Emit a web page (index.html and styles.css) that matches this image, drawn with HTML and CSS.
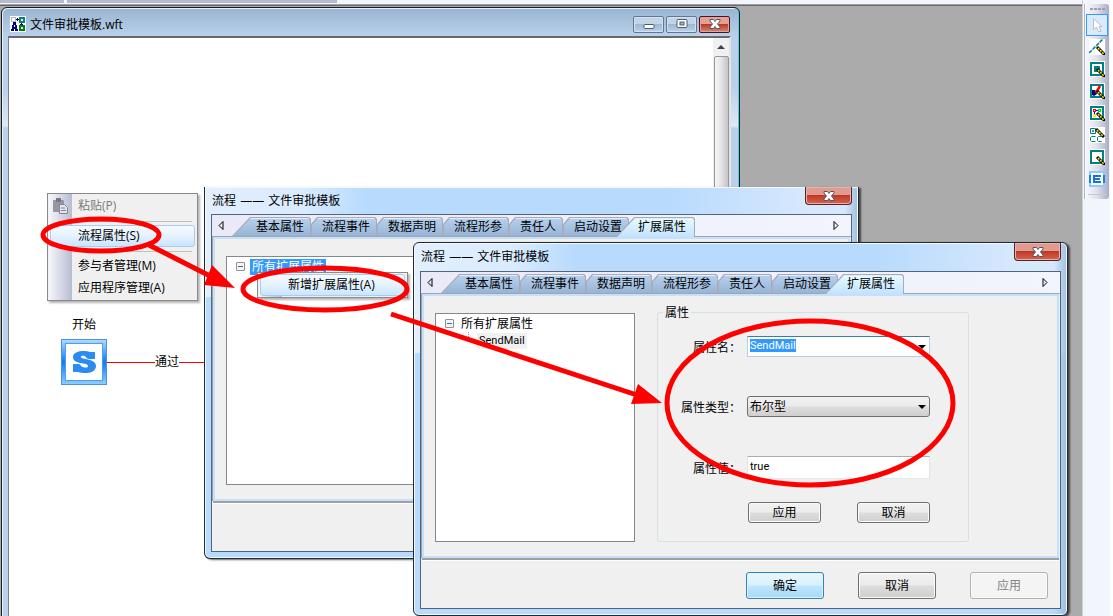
FILE: index.html
```html
<!DOCTYPE html>
<html lang="zh-CN">
<head>
    <meta charset="UTF-8">
    <meta name="viewport" content="width=device-width, initial-scale=1.0">
    <title>文件审批模板.wft</title>
    <link rel="stylesheet" href="styles.css">
</head>

<body>
    <div class="workspace">
        <div class="ribbon"><span class="ribbon-group short"></span><span class="ribbon-group"></span></div>
        <main class="mdi">

            <!-- Template editor window -->
            <section class="editor">
                <header class="editor-title">
                    <svg width="16" height="16" viewBox="0 0 16 16" shape-rendering="crispEdges">
                        <rect width="16" height="16" fill="#fff"/>
                        <path d="M1 1h5v5H1zM2 2v3h3V2z" fill="#b8b8b8" fill-rule="evenodd"/>
                        <path d="M9 1h6v6H9zM11 3v2h2V3z" fill="#008080" fill-rule="evenodd"/>
                        <path d="M9 9h6v6H9zM11 11v2h2v-2z" fill="#008000" fill-rule="evenodd"/>
                        <path d="M6 3h3v1H6zM7 2h1v3H7zM11 7h1v2h-1zM10 8h3v1h-3z" fill="#000080"/>
                        <path d="M3 6h3v3h1v4h1v2H5v-2H4v2H1v-2h1V9h1zM4 9v2h1V9z" fill="#000080" fill-rule="evenodd"/>
                    </svg>
                    <h1>文件审批模板.wft</h1>
                    <div class="window-buttons">
                        <button type="button" class="win-btn" aria-label="最小化"><svg width="12" height="12" viewBox="0 0 12 12"><rect x="1" y="6.500" width="10" height="4" rx="1" fill="#fff" stroke="#535b70"/></svg></button>
                        <button type="button" class="win-btn" aria-label="最大化"><svg width="12" height="12" viewBox="0 0 12 12"><rect x="1" y="1.500" width="10" height="8" rx="1" fill="#fff" stroke="#535b70"/><rect x="4" y="4" width="4" height="3" fill="#9ab6d4" stroke="#535b70"/></svg></button>
                        <button type="button" class="win-btn close" aria-label="关闭"><svg width="12" height="10" viewBox="0 0 12 10"><use href="#cross"/></svg></button>
                    </div>
                </header>
                <div class="editor-body">
                    <div class="sheet"></div>
                    <div class="scrollbar">
                        <svg width="8" height="5" viewBox="0 0 8 5"><path d="M0 5l4-4l4 4z" fill="#404040"/></svg>
                        <div class="thumb"></div>
                    </div>
                </div>
            </section>

            <!-- Start node of the flow -->
            <div class="start-label">开始</div>
            <div class="start-flow">
                <svg width="46" height="46" viewBox="0 0 46 46">
                    <defs>
                        <linearGradient id="frame" x1="0" y1="0" x2="0" y2="1">
                            <stop offset="0" stop-color="#b5dcff"/>
                            <stop offset=".5" stop-color="#0a7cf5"/>
                            <stop offset="1" stop-color="#8fd0ff"/>
                        </linearGradient>
                    </defs>
                    <rect x=".5" y=".5" width="45" height="45" fill="url(#frame)" stroke="#4a94dc"/>
                    <rect x="4.500" y="4.500" width="37" height="37" fill="#fff" stroke="#4b9ff0"/>
                    <path d="M34 13h-5c-6-2-17-1-17 5c0 8 15 5 15 9c0 2-4 2-7 0c-1-2-2-2-3-2h-5v8h5c6 2 18 2 18-6c0-8-15-6-15-9c0-2 4-1 5 0c1 2 2 2 4 2h5z" fill="#2a8cf2"/>
                </svg>
                <span class="link"></span>
                <span>通过</span>
                <span class="link grow"></span>
            </div>

            <nav class="menu flow-menu">
                <button type="button" disabled>粘贴(P)
                    <svg class="paste" width="17" height="16" viewBox="0 0 17 16"><rect x="1" y="2" width="11" height="12" rx="1" fill="#9696a2"/><rect x="4" y="0" width="5" height="4" fill="#777783"/><path d="M7.500 6.500h5l3 3v6h-8z" fill="#e4e4ee" stroke="#858591"/><path d="M9 10h4M9 12.500h5" stroke="#858591"/></svg>
                </button>
                <hr>
                <button type="button" class="hot">流程属性(S)</button>
                <hr>
                <button type="button">参与者管理(M)</button>
                <button type="button">应用程序管理(A)</button>
            </nav>

            <!-- First property dialog -->
            <section class="dialog dialog-back">
                <header class="dialog-title">
                    <h2>流程 <span class="dash">——</span> 文件审批模板</h2>
                    <button type="button" class="dialog-close" aria-label="关闭"><svg width="12" height="10" viewBox="0 0 12 10"><use href="#cross"/></svg></button>
                </header>
                <div class="client">
                    <div class="tabs">
                        <button type="button" class="scroll" aria-label="左移"><svg width="6" height="9" viewBox="0 0 6 9"><path d="M5 .5v8L1 4.500z" fill="none" stroke="#000"/></svg></button>
                        <button type="button" class="tab first">基本属性</button>
                        <button type="button" class="tab">流程事件</button>
                        <button type="button" class="tab">数据声明</button>
                        <button type="button" class="tab">流程形参</button>
                        <button type="button" class="tab">责任人</button>
                        <button type="button" class="tab">启动设置</button>
                        <button type="button" class="tab active">扩展属性</button>
                        <button type="button" class="scroll right" aria-label="右移"><svg width="6" height="9" viewBox="0 0 6 9"><path d="M1 .5v8L5 4.500z" fill="none" stroke="#000"/></svg></button>
                    </div>
                    <div class="panel">
                        <ul class="tree">
                            <li><span class="toggle"></span><span class="node selected">所有扩展属性</span></li>
                        </ul>
                    </div>
                    <footer class="actions"></footer>
                </div>
            </section>

            <nav class="menu attr-menu">
                <button type="button" class="hot">新增扩展属性(A)</button>
            </nav>

            <!-- Second property dialog -->
            <section class="dialog dialog-front">
                <header class="dialog-title">
                    <h2>流程 <span class="dash">——</span> 文件审批模板</h2>
                    <button type="button" class="dialog-close" aria-label="关闭"><svg width="12" height="10" viewBox="0 0 12 10"><use href="#cross"/></svg></button>
                </header>
                <div class="client">
                    <div class="tabs">
                        <button type="button" class="scroll" aria-label="左移"><svg width="6" height="9" viewBox="0 0 6 9"><path d="M5 .5v8L1 4.500z" fill="none" stroke="#000"/></svg></button>
                        <button type="button" class="tab first">基本属性</button>
                        <button type="button" class="tab">流程事件</button>
                        <button type="button" class="tab">数据声明</button>
                        <button type="button" class="tab">流程形参</button>
                        <button type="button" class="tab">责任人</button>
                        <button type="button" class="tab">启动设置</button>
                        <button type="button" class="tab active">扩展属性</button>
                        <button type="button" class="scroll right" aria-label="右移"><svg width="6" height="9" viewBox="0 0 6 9"><path d="M1 .5v8L5 4.500z" fill="none" stroke="#000"/></svg></button>
                    </div>
                    <div class="panel">
                        <ul class="tree">
                            <li><span class="toggle"></span><span class="node">所有扩展属性</span>
                                <ul>
                                    <li><span class="node current">SendMail</span></li>
                                </ul>
                            </li>
                        </ul>
                        <fieldset>
                            <legend>属性</legend>
                            <form class="attr-form">
                                <label for="attr-name">属性名：</label>
                                <div class="combo">
                                    <input type="text" id="attr-name" value="SendMail">
                                    <span class="arrow"></span>
                                </div>
                                <label for="attr-type">属性类型：</label>
                                <div class="pick">
                                    <select id="attr-type"><option>布尔型</option></select>
                                    <span class="arrow"></span>
                                </div>
                                <label for="attr-value">属性值：</label>
                                <input type="text" id="attr-value" class="value" value="true">
                                <div class="form-buttons">
                                    <button type="button" class="btn">应用</button>
                                    <button type="button" class="btn">取消</button>
                                </div>
                            </form>
                        </fieldset>
                    </div>
                    <footer class="actions">
                        <button type="button" class="btn large default">确定</button>
                        <button type="button" class="btn large">取消</button>
                        <button type="button" class="btn large" disabled>应用</button>
                    </footer>
                </div>
            </section>

            <!-- Red marks that show the order of the steps -->
            <svg class="marks">
                <g fill="none" stroke="#f00" stroke-width="5">
                    <ellipse cx="101" cy="229" rx="58" ry="16"/>
                    <ellipse cx="325" cy="283" rx="82" ry="21"/>
                    <ellipse cx="810" cy="397" rx="143" ry="82"/>
                    <path d="M149 239L212 271M391 308L640 390"/>
                </g>
                <path d="M235 282L212 259L204 279zM662 397L638 378L631 398z" fill="#f00"/>
            </svg>
        </main>
    </div>

    <aside class="side">
        <div class="toolbox">
            <span class="grip"></span>
            <button type="button" class="tool on" aria-label="选择"><svg width="16" height="16" viewBox="0 0 16 16"><path d="M4.500 1.500v11l3-2.500l2 4.500h2.500l-2-5h3z" fill="#fff" stroke="#bcc0c8"/></svg></button>
            <button type="button" class="tool" aria-label="连线"><svg width="16" height="16" viewBox="0 0 16 16"><rect width="16" height="16" fill="#fff"/><path d="M0 14L14 0" stroke="#008080" stroke-width="1.500" stroke-dasharray="4 1"/><use href="#pen"/></svg></button>
            <button type="button" class="tool" aria-label="活动"><svg width="16" height="16" viewBox="0 0 16 16"><use href="#box"/><rect x="5" y="5" width="6" height="6" fill="#008080"/><use href="#pen"/></svg></button>
            <button type="button" class="tool" aria-label="审批"><svg width="16" height="16" viewBox="0 0 16 16"><use href="#box"/><path d="M3 7h3l2 4l-3 2l-2-1z" fill="#000080"/><path d="M6 9l2-1l3-5" fill="none" stroke="#f00" stroke-width="2.500"/><use href="#pen"/></svg></button>
            <button type="button" class="tool" aria-label="子流程"><svg width="16" height="16" viewBox="0 0 16 16"><use href="#box"/><path d="M7 5.500h3M5.500 7v3" stroke="#00f"/><rect x="4.500" y="4.500" width="2" height="2" fill="none" stroke="#f00"/><rect x="9.500" y="4.500" width="2" height="2" fill="none" stroke="#0d0"/><rect x="4.500" y="9.500" width="2" height="2" fill="none" stroke="#ee0"/><use href="#pen"/></svg></button>
            <button type="button" class="tool" aria-label="抄送"><svg width="16" height="16" viewBox="0 0 16 16"><rect width="16" height="16" fill="#fff"/><path d="M1.500 1.500h5v5h-5zM3.500 3.500h1v1h-1z" fill="none" stroke="#008080"/><path d="M6.500 9.500h-4l-1 1v3l1 1h4M12.500 9.500h-3l-1 1v3l1 1h3" fill="none" stroke="#008080"/><path d="M7 2l8 8" stroke="#000" stroke-width="3"/><path d="M8 3l6 6" stroke="#fe0" stroke-width="1.500" stroke-dasharray="2 1"/></svg></button>
            <button type="button" class="tool" aria-label="空节点"><svg width="16" height="16" viewBox="0 0 16 16"><use href="#box"/><use href="#pen"/></svg></button>
            <button type="button" class="tool" aria-label="结束"><svg width="16" height="16" viewBox="0 0 16 16"><rect width="16" height="16" fill="#8ccaff"/><rect y="4" width="16" height="8" fill="#1683f2"/><rect x="2" y="2" width="12" height="12" fill="#fff"/><path d="M12 5H5v6h7M5 8h6" fill="none" stroke="#1b70df" stroke-width="2"/></svg></button>
            <span class="rule"></span>
        </div>
    </aside>

    <svg class="defs">
        <defs>
            <g id="pen"><path d="M8 8l8 8" stroke="#000" stroke-width="3"/><path d="M9 9l6 6" stroke="#fe0" stroke-width="1.500" stroke-dasharray="2 1"/></g>
            <g id="box"><rect width="16" height="16" fill="#fff"/><rect x="2" y="2" width="12" height="12" fill="#fff" stroke="#008080" stroke-width="2"/></g>
            <g id="cross"><path d="M1 .5h3.500L6 2.500L7.500 .5H11V2L8.500 5L11 8v1.500H7.500L6 7.500L4.500 9.500H1V8l2.500-3L1 2z" fill="#fff" stroke="#535666"/></g>
        </defs>
    </svg>
    <script>
        document.getElementById("attr-name").select();
    </script>
</body>

</html>
```
FILE: styles.css
```css
* {
    box-sizing: border-box;
}

body {
    margin: 0;
    height: 100vh;
    display: flex;
    overflow: hidden;
    font-family: "Open Sans", "Noto Sans CJK SC", sans-serif;
    font-size: 12px;
    line-height: 16px;
    color: #000;
    background-color: #f3f5fd;
}

button,
input,
select {
    font: inherit;
    color: inherit;
    margin: 0;
    padding: 0;
}

h1,
h2 {
    margin: 0;
    font-size: 12px;
    font-weight: normal;
}

svg {
    display: block;
    flex: none;
}

.defs {
    position: absolute;
    width: 0;
    height: 0;
}

.workspace {
    flex: 1;
    display: flex;
    flex-direction: column;
    min-width: 0;
}

.ribbon {
    flex: none;
    display: flex;
    gap: 3px;
    height: 6px;
    border-bottom: 1px solid #696969;
    box-shadow: inset 0 -1px #a0a0a0;
}

.ribbon-group {
    width: 270px;
    height: 3px;
    background-color: #b5bad0;
}

.ribbon-group.short {
    width: 64px;
}

.mdi {
    flex: 1;
    position: relative;
    overflow: hidden;
    background-color: #ababab;
}

/* Editor window */
.editor {
    position: absolute;
    left: 1px;
    top: 1px;
    bottom: -20px;
    width: 739px;
    display: flex;
    flex-direction: column;
    padding: 0 8px 0 6px;
    border: 1px solid #1c1c1c;
    border-radius: 6px 6px 0 0;
    background: linear-gradient(#99b4d1, #b9d1ea 28px, #b9d1ea 80px, #dce8f6 118px, #b9d1ea 120px);
    box-shadow: inset -1px 0 #3fd3ee, inset 1px 1px #e4f0fb;
}

.editor-title {
    display: flex;
    align-items: center;
    gap: 4px;
    height: 28px;
    padding-top: 4px;
    padding-left: 2px;
}

.editor-title h1 {
    padding-top: 2px;
}

.window-buttons {
    display: flex;
    gap: 2px;
    margin-left: auto;
    padding-right: 1px;
}

.win-btn {
    display: flex;
    align-items: center;
    justify-content: center;
    width: 31px;
    height: 17px;
    border: 1px solid #64758f;
    border-radius: 2px;
    background: linear-gradient(#c2d5e8 45%, #9cb8d5 50%, #bcd2e8);
    box-shadow: inset 0 0 0 1px #d3e2f1;
}

.win-btn.close {
    border-color: #4b1320;
    background: linear-gradient(#e5a095 45%, #b93b22 50%, #d88778);
    box-shadow: inset 0 0 0 1px #e5a397;
}

.editor-body {
    flex: 1;
    display: flex;
    border: 1px solid #808080;
    border-top: 2px solid #696969;
    border-right: 2px solid #e3e3e3;
    background-color: #fff;
}

.sheet {
    flex: 1;
}

.scrollbar {
    display: flex;
    flex-direction: column;
    align-items: center;
    gap: 7px;
    width: 16px;
    padding-top: 6px;
    background-color: #f0f0f0;
}

.thumb {
    flex: 1;
    width: 15px;
    border: 1px solid #979797;
    border-radius: 2px;
    background: linear-gradient(90deg, #f5f5f5, #e6e6e8 45%, #c3c3c8);
}

/* Flow drawing */
.start-label {
    position: absolute;
    left: 72px;
    top: 311px;
}

.start-flow {
    position: absolute;
    left: 61px;
    top: 333px;
    width: 143px;
    display: flex;
    align-items: center;
}

.link {
    width: 48px;
    height: 1px;
    background-color: #f00;
}

.link.grow {
    flex: 1;
}

/* Context menus */
.menu {
    position: absolute;
    display: flex;
    flex-direction: column;
    width: 151px;
    padding: 1px 2px;
    border: 1px solid #8a8a8a;
    background: linear-gradient(90deg, #f5f6fc, #b7bcd2) 1px 0 / 23px 100% no-repeat #f0f0f0;
    box-shadow: 2px 2px 2px rgba(0, 0, 0, 0.3);
}

.menu button {
    position: relative;
    height: 22px;
    padding-left: 27px;
    border: 1px solid transparent;
    border-radius: 3px;
    background: none;
    text-align: left;
}

.menu button:disabled {
    color: #7b7b7b;
}

.menu .hot {
    border-color: #a9cdee;
    background: linear-gradient(#f5faff, #e5f2ff 50%, #c9e5ff);
}

.menu hr {
    width: 114px;
    height: 1px;
    margin: 4px 0 3px 28px;
    border: 0;
    background-color: #c0c0c0;
}

.paste {
    position: absolute;
    left: 1px;
    top: 2px;
}

.flow-menu {
    left: 47px;
    top: 187px;
}

.attr-menu {
    left: 257px;
    top: 266px;
}

/* Property dialogs */
.dialog {
    position: absolute;
    width: 655px;
    padding: 0 6px 6px;
    border: 1px solid #1f2a33;
    border-radius: 6px;
    background: linear-gradient(90deg, transparent 98%, #9fbede) 0 0 / 100% 100%, linear-gradient(90deg, #e2effd, #d9ebfe 15%, #b7dafd 25%, #b7dafd 70%, #d6e8fc 92%) 0 0 / 100% 110px no-repeat #b7dafd;
    box-shadow: inset 0 0 0 1px #f2f9ff, 2px 1px 2px rgba(0, 0, 0, 0.6);
}

.dialog-back {
    left: 204px;
    top: 181px;
    border-top: 0;
    border-radius: 0 0 6px 6px;
}

.dialog-front {
    left: 413px;
    top: 236px;
}

.dialog-title {
    display: flex;
    align-items: center;
    justify-content: space-between;
    height: 28px;
    padding-left: 1px;
}

.dialog-back .dialog-title {
    height: 27px;
}

.dash {
    padding: 0 1px;
}

.dialog-close {
    align-self: flex-start;
    display: flex;
    align-items: center;
    justify-content: center;
    width: 47px;
    height: 18px;
    border: 1px solid #54232a;
    border-top: 0;
    border-radius: 0 0 4px 4px;
    background: linear-gradient(#e09a90 45%, #bb3a25 50%, #d9634e);
    box-shadow: inset 0 0 0 1px #eab3aa;
}

.client {
    border: 1px solid #53657a;
    background-color: #f0f0f0;
}

.tabs {
    display: flex;
    align-items: flex-end;
    height: 22px;
    border-bottom: 1px solid #a5a5ad;
    background: linear-gradient(90deg, #eae9f8, #f2f5fd);
}

.scroll {
    display: flex;
    align-items: center;
    justify-content: center;
    width: 20px;
    height: 22px;
    padding-right: 2px;
    border: 0;
    background: none;
}

.scroll.right {
    width: 30px;
    margin-left: auto;
    padding-right: 0;
}

.tab {
    position: relative;
    isolation: isolate;
    height: 19px;
    padding: 1px 7px 0 11px;
    border: 0;
    background-color: #aaa9b5;
    clip-path: polygon(0 7px, 6px 0, calc(100% - 2px) 0, 100% 2px, 100% 100%, 0 100%);
}

.tab::before {
    content: "";
    position: absolute;
    inset: 1px 1px 0;
    z-index: -1;
    background: linear-gradient(#b6d1f0, #98b4d4);
    box-shadow: inset 0 1px #e3edf8;
    clip-path: inherit;
}

.tab.first {
    padding-left: 24px;
    clip-path: polygon(0 100%, 18px 0, calc(100% - 2px) 0, 100% 2px, 100% 100%);
}

.tab.active {
    height: 20px;
    margin-left: -13px;
    margin-bottom: -1px;
    padding: 0 9px 0 22px;
    clip-path: polygon(0 100%, 18px 0, calc(100% - 2px) 0, 100% 2px, 100% 100%);
}

.tab.active::before {
    background: linear-gradient(#e6fcff, #c3e2ff);
}

.panel {
    display: flex;
    align-items: flex-start;
    gap: 22px;
    margin-right: 1px;
    margin-left: 1px;
    padding: 17px 11px 14px;
    border: 2px solid #c3e0fd;
    box-shadow: 0 2px #a0a0a0, 0 3px #fff, -1px 0 #a0a0a0;
}

.tree,
.tree ul {
    margin: 0;
    padding: 0;
    list-style: none;
}

.tree {
    width: 200px;
    height: 229px;
    padding: 2px 9px;
    border: 1px solid #828790;
    background-color: #fff;
}

.toggle {
    display: inline-block;
    width: 9px;
    height: 9px;
    margin-right: 5px;
    border: 1px solid #919191;
    border-radius: 1px;
    background: linear-gradient(#4b63a7, #4b63a7) center / 5px 1px no-repeat #f4f4f4;
}

.node {
    display: inline-block;
    height: 16px;
    padding: 0 2px;
}

.node.selected {
    color: #fff;
    background-color: #39f;
}

.tree ul {
    margin-left: 23px;
    padding-left: 9px;
    background: repeating-linear-gradient(#a0a0a0 0 1px, transparent 1px 2px) 0 0 / 1px 8px no-repeat;
}

.node.current {
    font-family: Roboto, sans-serif;
    font-size: 11px;
    background-color: #f0f0f0;
}

fieldset {
    width: 312px;
    height: 238px;
    margin: -9px 0 0;
    padding: 0 0 0 14px;
    border: 1px solid #d5dfe5;
    border-radius: 3px;
}

legend {
    height: 17px;
    margin-left: -9px;
    padding: 1px 2px 0;
}

.attr-form {
    display: grid;
    grid-template-columns: 69px 183px;
    column-gap: 6px;
    row-gap: 39px;
    align-items: center;
    padding-top: 15px;
}

.attr-form label {
    padding-top: 2px;
    text-align: right;
}

.combo,
.pick {
    position: relative;
    height: 21px;
}

.combo input,
.value {
    width: 100%;
    height: 21px;
    padding: 0 2px 2px;
    border: 1px solid #b5cfe7;
    border-top-color: #3d7bad;
    outline: 0;
    background-color: #fff;
    font-family: Roboto, sans-serif;
    font-size: 11px;
}

.value {
    height: 23px;
    border-color: #abadb3 #e2e3ea #e3e9ef;
}

.pick select {
    appearance: none;
    width: 100%;
    height: 21px;
    padding: 1px 2px 0;
    border: 1px solid #707070;
    border-radius: 3px;
    background: linear-gradient(#f2f2f2, #ebebeb 48%, #dddddd 52%, #cfcfcf);
}

.arrow {
    position: absolute;
    right: 4px;
    top: 9px;
    border: 4px solid transparent;
    border-top-color: #000;
    border-bottom: 0;
    pointer-events: none;
}

::selection {
    color: #fff;
    background-color: #39f;
}

.form-buttons {
    grid-column: 2;
    display: flex;
    justify-content: space-between;
    margin-top: -16px;
    padding-left: 1px;
}

.btn {
    width: 73px;
    height: 21px;
    padding-top: 1px;
    border: 1px solid #707070;
    border-radius: 3px;
    background: linear-gradient(#f2f2f2, #ebebeb 48%, #dddddd 52%, #cfcfcf);
    box-shadow: inset 0 0 0 1px #fbfbfb;
}

.btn.large {
    width: 78px;
    height: 27px;
}

.btn.default {
    border-color: #3c7fb1;
    background: linear-gradient(#eaf6fd, #d9f0fc 48%, #bee6fd 52%, #a7d9f5);
    box-shadow: inset 0 0 0 1px #d8f5fe;
}

.btn:disabled {
    border-color: #adb2b5;
    background: #f4f4f4;
    color: #838383;
}

.actions {
    display: flex;
    justify-content: flex-end;
    gap: 34px;
    min-height: 50px;
    padding: 14px 12px 0 0;
}

/* Step marks */
.marks {
    position: absolute;
    left: 0;
    top: 0;
    width: 100%;
    height: 100%;
    pointer-events: none;
}

/* Tool strip */
.side {
    width: 31px;
    padding: 4px 1px 0;
    border-left: 1px solid #d0d0d0;
    border-right: 3px solid #fff;
}

.toolbox {
    display: flex;
    flex-direction: column;
    align-items: center;
    height: 195px;
    border-left: 1px solid #b4b6cc;
    border-radius: 0 3px 3px 0;
    background: linear-gradient(90deg, #f8f8ff, #dfe0ec 50%, #abacc4);
}

.grip {
    width: 15px;
    height: 2px;
    margin: 4px 0;
    background: repeating-linear-gradient(90deg, #a0a0a8 0 3px, transparent 3px 4px);
}

.tool {
    display: flex;
    align-items: center;
    justify-content: center;
    width: 22px;
    height: 22px;
    border: 1px solid transparent;
    background: none;
}

.tool.on {
    border-color: #39f;
    background-color: #d9eafb;
}

.rule {
    width: 19px;
    height: 1px;
    margin-top: 4px;
    background-color: #c8c8d0;
}
```
